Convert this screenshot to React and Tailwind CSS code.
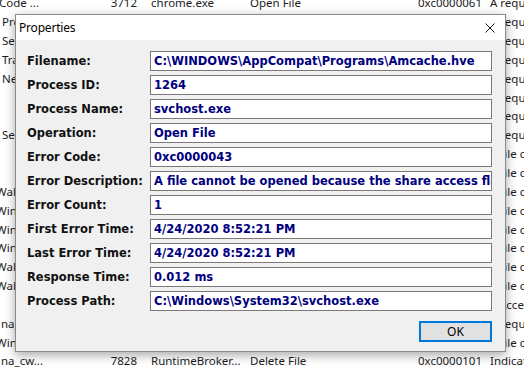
import React from "react";

const rows = [
  { l: "Code ...", lo: "ml-[-1px]", pid: "3712", proc: "chrome.exe", op: "Open File", res: "0xc0000061", det: "A request is not valid", dpl: "" },
  { l: "Prefetch", lo: "ml-[2px]", pid: "", proc: "", op: "", res: "", det: "A request is not valid", dpl: "" },
  { l: "Security", lo: "ml-[2px]", pid: "", proc: "", op: "", res: "", det: "A request is not valid", dpl: "" },
  { l: "Tracing", lo: "ml-[2px]", pid: "", proc: "", op: "", res: "", det: "A request is not valid", dpl: "" },
  { l: "Network", lo: "ml-[2px]", pid: "", proc: "", op: "", res: "", det: "A request is not valid", dpl: "" },
  { l: "", lo: "", pid: "", proc: "", op: "", res: "", det: "A request is not valid", dpl: "" },
  { l: "", lo: "", pid: "", proc: "", op: "", res: "", det: "A request is not valid", dpl: "" },
  { l: "Services", lo: "ml-[2px]", pid: "", proc: "", op: "", res: "", det: "A request is not valid", dpl: "" },
  { l: "", lo: "", pid: "", proc: "", op: "", res: "", det: "A file cannot be opened", dpl: "" },
  { l: "", lo: "", pid: "", proc: "", op: "", res: "", det: "A file cannot be opened", dpl: "" },
  { l: "Wallpaper", lo: "ml-[-4px]", pid: "", proc: "", op: "", res: "", det: "A file cannot be opened", dpl: "" },
  { l: "Windows", lo: "ml-[-4px]", pid: "", proc: "", op: "", res: "", det: "A file cannot be opened", dpl: "" },
  { l: "Windows", lo: "ml-[-4px]", pid: "", proc: "", op: "", res: "", det: "A file cannot be opened", dpl: "" },
  { l: "Windows", lo: "ml-[-4px]", pid: "", proc: "", op: "", res: "", det: "A file cannot be opened", dpl: "" },
  { l: "Wallpaper", lo: "ml-[-4px]", pid: "", proc: "", op: "", res: "", det: "A file cannot be opened", dpl: "" },
  { l: "Wallpaper", lo: "ml-[-4px]", pid: "", proc: "", op: "", res: "", det: "A file cannot be opened", dpl: "" },
  { l: "", lo: "", pid: "", proc: "", op: "", res: "", det: "Access denied", dpl: "pl-[9px]" },
  { l: "na_cw5n1h2", lo: "ml-[1px]", pid: "", proc: "", op: "", res: "", det: "A request is not valid", dpl: "" },
  { l: "Windows", lo: "ml-[-4px]", pid: "", proc: "", op: "", res: "", det: "A file cannot be opened", dpl: "" },
  { l: "na_cw...", lo: "ml-[1px]", pid: "7828", proc: "RuntimeBroker...", op: "Delete File", res: "0xc0000101", det: "Indicates that", dpl: "" },
];

const props = [
  ["Filename:", "C:\\WINDOWS\\AppCompat\\Programs\\Amcache.hve"],
  ["Process ID:", "1264"],
  ["Process Name:", "svchost.exe"],
  ["Operation:", "Open File"],
  ["Error Code:", "0xc0000043"],
  ["Error Description:", "A file cannot be opened because the share access flags are incompatible"],
  ["Error Count:", "1"],
  ["First Error Time:", "4/24/2020 8:52:21 PM"],
  ["Last Error Time:", "4/24/2020 8:52:21 PM"],
  ["Response Time:", "0.012 ms"],
  ["Process Path:", "C:\\Windows\\System32\\svchost.exe"],
];

export default function App() {
  return (
    <div className="relative w-[524px] h-[371px] overflow-hidden bg-white">
      <div className="flex flex-col mt-[-6px] text-[11.5px] text-[#1c1c1c] [font-family:'Segoe_UI','Noto_Sans',sans-serif]">
        {rows.map((r, i) => (
          <div key={i} className="flex items-center h-[18.85px] leading-[18px] whitespace-nowrap w-[600px]">
            <div className="w-[110px] shrink-0 overflow-hidden">
              <span className={`block ${r.lo}`}>{r.l}</span>
            </div>
            <div className="w-[27px] shrink-0 text-right">{r.pid}</div>
            <div className="w-[14px] shrink-0" />
            <div className="w-[99px] shrink-0">{r.proc}</div>
            <div className="w-[168px] shrink-0">{r.op}</div>
            <div className="w-[72px] shrink-0">{r.res}</div>
            <div className={`shrink-0 ${r.dpl}`}>{r.det}</div>
          </div>
        ))}
      </div>

      <div className="absolute left-[15px] top-[14px] w-[491px] h-[338px] border border-[#8a8a8a] bg-[#f0f0f0] shadow-[0_3px_10px_rgba(0,0,0,0.35)] flex flex-col">
        <div className="h-[25px] bg-white flex items-center justify-between pl-[3px] pr-[10px]">
          <span className="text-[12px] text-black [font-family:'Segoe_UI','Noto_Sans',sans-serif] tracking-[-0.2px]">Properties</span>
          <svg width="10" height="10" viewBox="0 0 10 10" className="block">
            <path d="M0.5 0.5 L9.5 9.5 M9.5 0.5 L0.5 9.5" stroke="#111" strokeWidth="1" fill="none" />
          </svg>
        </div>
        <div className="flex flex-col pt-[11px] pl-[11px] pr-[13px] gap-[4px] [font-family:'DejaVu_Sans',sans-serif] font-bold text-[11.5px]">
          {props.map(([k, v]) => (
            <div key={k} className="flex items-center h-[20px]">
              <div className="w-[123px] shrink-0 text-[#111] whitespace-nowrap pt-[1px]">{k}</div>
              <div className="w-[342px] shrink-0 h-[20px] border border-[#7a7a7a] bg-white px-[3px] pt-[1px] flex items-center overflow-hidden whitespace-nowrap text-[#000080]">
                {v}
              </div>
            </div>
          ))}
          <div className="flex justify-end mt-[6px]">
            <div className="w-[73px] h-[21px] border-2 border-[#0078d7] bg-[#e1e1e1] flex items-center justify-center text-[12px] font-normal text-black [font-family:'Segoe_UI','Noto_Sans',sans-serif]">
              OK
            </div>
          </div>
        </div>
      </div>
    </div>
  );
}
